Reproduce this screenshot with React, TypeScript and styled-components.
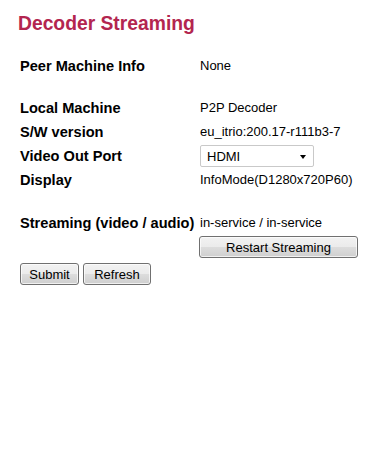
import styled, { createGlobalStyle } from "styled-components";

const GlobalStyle = createGlobalStyle`
  html, body {
    margin: 0;
    padding: 0;
    background: #ffffff;
  }
  body {
    font-family: "Liberation Sans", Arial, sans-serif;
    color: #000000;
  }
`;

const Page = styled.div`
  width: 377px;
  height: 454px;
  background: #ffffff;
`;

const Title = styled.h1`
  margin: 12px 0 0 18px;
  font-size: 19.3px;
  line-height: 24px;
  font-weight: bold;
  color: #b3254f;
`;

const Content = styled.div`
  padding: 18px 0 0 20px;
  display: flex;
  flex-direction: column;
`;

const Section = styled.div<{ $gap?: number }>`
  display: flex;
  flex-direction: column;
  margin-top: ${(p) => p.$gap ?? 0}px;
`;

const Row = styled.div`
  display: grid;
  grid-template-columns: 180px auto;
  align-items: center;
  height: 24px;
`;

const Label = styled.div`
  font-size: 14.6px;
  font-weight: bold;
  line-height: 24px;
  white-space: nowrap;
`;

const Value = styled.div`
  font-size: 13px;
  line-height: 24px;
  white-space: nowrap;
`;

const SelectWrap = styled.div`
  position: relative;
  width: 114px;
  height: 22px;

  &::after {
    content: "";
    position: absolute;
    right: 8px;
    top: 10px;
    border-left: 3.5px solid transparent;
    border-right: 3.5px solid transparent;
    border-top: 4px solid #000000;
    pointer-events: none;
  }
`;

const Select = styled.select`
  appearance: none;
  -webkit-appearance: none;
  box-sizing: border-box;
  width: 100%;
  height: 22px;
  margin: 0;
  padding: 0 0 0 6px;
  border: 1px solid #c9c9c9;
  border-radius: 2px;
  background: #ffffff;
  font-family: "Liberation Sans", Arial, sans-serif;
  font-size: 13px;
  color: #000000;
  outline: none;
`;

const Button = styled.button<{ $width: number }>`
  box-sizing: border-box;
  width: ${(p) => p.$width}px;
  height: 22px;
  margin: 0;
  padding: 0;
  border: 1px solid #707070;
  border-radius: 3px;
  background: linear-gradient(
    to bottom,
    #f2f2f2 0%,
    #ebebeb 50%,
    #dddddd 50%,
    #cfcfcf 100%
  );
  box-shadow: inset 0 0 0 1px rgba(255, 255, 255, 0.7);
  font-family: "Liberation Sans", Arial, sans-serif;
  font-size: 13px;
  color: #000000;
  cursor: pointer;
`;

const RestartRow = styled.div`
  padding: 1px 0 0 179px;
  height: 22px;
`;

const ButtonBar = styled.div`
  display: flex;
  gap: 4px;
  margin-top: 5px;
`;

export default function App() {
  return (
    <Page>
      <GlobalStyle />
      <Title>Decoder Streaming</Title>
      <Content>
        <Section>
          <Row>
            <Label>Peer Machine Info</Label>
            <Value>None</Value>
          </Row>
        </Section>
        <Section $gap={18}>
          <Row>
            <Label>Local Machine</Label>
            <Value>P2P Decoder</Value>
          </Row>
          <Row>
            <Label>S/W version</Label>
            <Value>eu_itrio:200.17-r111b3-7</Value>
          </Row>
          <Row>
            <Label>Video Out Port</Label>
            <SelectWrap>
              <Select defaultValue="HDMI">
                <option value="HDMI">HDMI</option>
                <option value="Component">Component</option>
                <option value="Composite">Composite</option>
              </Select>
            </SelectWrap>
          </Row>
          <Row>
            <Label>Display</Label>
            <Value>InfoMode(D1280x720P60)</Value>
          </Row>
        </Section>
        <Section $gap={19}>
          <Row>
            <Label>Streaming (video / audio)</Label>
            <Value>in-service / in-service</Value>
          </Row>
          <RestartRow>
            <Button $width={159}>Restart Streaming</Button>
          </RestartRow>
        </Section>
        <ButtonBar>
          <Button $width={59}>Submit</Button>
          <Button $width={68}>Refresh</Button>
        </ButtonBar>
      </Content>
    </Page>
  );
}
